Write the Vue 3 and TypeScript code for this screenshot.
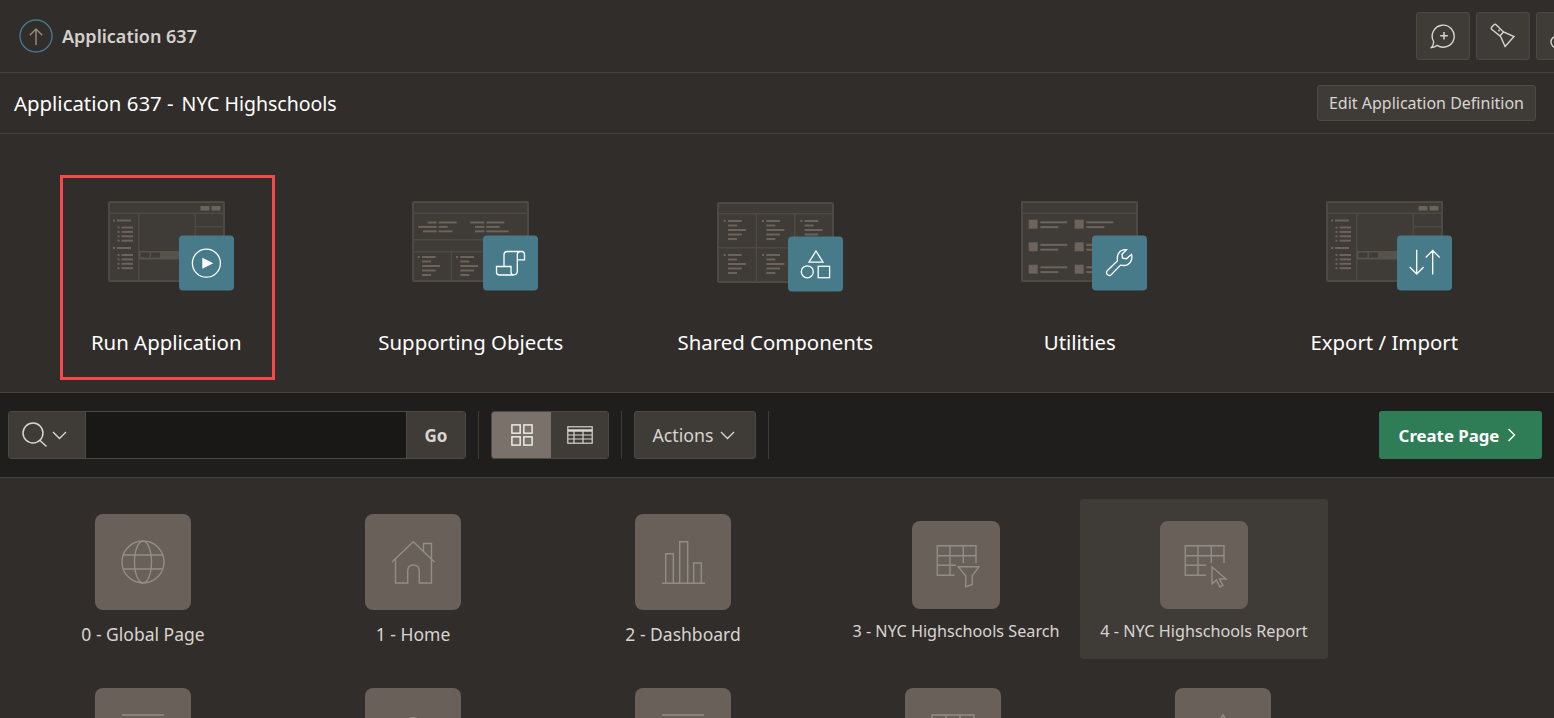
<script setup lang="ts">
type Rect = { x: number; y: number; w: number; h: number; fill: string }
type ArtKind = 'run' | 'objects' | 'shared' | 'utilities' | 'export'

const LINE = '#4d4944'
const BAR = '#6b635c'
const BAND = '#57524c'
const DARK = '#3f3b37'

function line(x: number, y: number, w: number, h: number): Rect {
  return { x, y, w, h, fill: LINE }
}
function bar(x: number, y: number, w: number, h = 2, fill = BAR): Rect {
  return { x, y, w, h, fill }
}

function appLayout(): Rect[] {
  const out: Rect[] = [
    line(1, 11.5, 115, 1.5),
    line(30, 12, 1.5, 68),
    line(86.5, 12, 1.5, 38),
    line(86.5, 25, 30, 1.5),
    bar(31, 50, 56, 8.5, BAND),
    bar(32.5, 51.5, 9, 5, DARK),
    bar(43, 51.5, 9, 5, DARK),
    bar(92.5, 5, 9, 4.6),
    bar(103.5, 5, 9, 4.6),
  ]
  for (const top of [18.5, 46]) {
    out.push(bar(5, top, 2, 2), bar(9, top, 14, 2))
    for (const step of [7, 11.4, 15.8, 20.2]) {
      out.push(bar(9.5, top + step, 2, 2), bar(13.5, top + step, 11.5, 2))
    }
  }
  return out
}

function objectsLayout(): Rect[] {
  const out: Rect[] = [
    line(1, 11.5, 115, 1.5),
    line(1, 38, 115, 1.5),
    line(1, 50, 115, 1.5),
    line(38.6, 50, 1.5, 30),
    line(77, 50, 1.5, 30),
  ]
  const rows: number[][] = [
    [15.7, 9, 26.7, 18, 58.3, 14, 74.3, 18],
    [6.3, 18.4, 26.7, 9, 63, 9.4, 74.3, 13.4],
    [11, 13.7, 26.7, 13.7, 63, 9.4, 74.3, 22.3],
  ]
  rows.forEach((r, i) => {
    for (let k = 0; k < r.length; k += 2) out.push(bar(r[k], 20.5 + i * 4.4, r[k + 1]))
  })
  for (const off of [0, 38.3]) {
    out.push(bar(5.7 + off, 55, 2, 2))
    ;[13.7, 9, 18, 13.7, 9].forEach((w, i) => out.push(bar(10 + off, 55 + i * 4.5, w)))
  }
  return out
}

function sharedLayout(): Rect[] {
  const out: Rect[] = [
    line(1, 11, 115, 1.5),
    line(1, 45, 115, 1.5),
    line(38.6, 11, 1.5, 69),
    line(77, 11, 1.5, 69),
  ]
  for (const top of [18, 52]) {
    for (const off of [0, 38.3, 76.6]) {
      out.push(bar(6.7 + off, top, 2, 2))
      ;[13.7, 9, 18, 13.7, 9].forEach((w, i) => out.push(bar(11 + off, top + i * 4.5, w)))
    }
  }
  return out
}

function utilitiesLayout(): Rect[] {
  const out: Rect[] = [line(1, 11.5, 115, 1.5)]
  for (const top of [18.7, 41.3, 63.7]) {
    for (const off of [7.7, 53.7]) {
      out.push(bar(off, top, 9, 9, BAR), bar(off + 11.6, top + 1.6, 27), bar(off + 11.6, top + 6.4, 18))
    }
  }
  return out
}

const layouts: Record<ArtKind, Rect[]> = {
  run: appLayout(),
  objects: objectsLayout(),
  shared: sharedLayout(),
  utilities: utilitiesLayout(),
  export: appLayout(),
}

const heroItems: { kind: ArtKind; label: string }[] = [
  { kind: 'run', label: 'Run Application' },
  { kind: 'objects', label: 'Supporting Objects' },
  { kind: 'shared', label: 'Shared Components' },
  { kind: 'utilities', label: 'Utilities' },
  { kind: 'export', label: 'Export / Import' },
]

const topRow = [
  { icon: 'globe', label: '0 - Global Page', cls: '' },
  { icon: 'home', label: '1 - Home', cls: '' },
  { icon: 'chart', label: '2 - Dashboard', cls: '' },
  { icon: 'filter', label: '3 - NYC Highschools Search', cls: 'compact first' },
  { icon: 'cursor', label: '4 - NYC Highschools Report', cls: 'compact hovered' },
]
const nextRow = ['form', 'search', 'form', 'table', 'tip']
</script>

<template>
  <div class="page">
    <header class="topbar">
      <div class="crumb">
        <svg class="up" width="34" height="34" viewBox="0 0 34 34" fill="none">
          <circle cx="17" cy="17" r="16" stroke="#47798a" stroke-width="1.4" />
          <path d="M17 26V10M10.800 16.200 17 10l6.200 6.200" stroke="#94877b" stroke-width="1.5" />
        </svg>
        <span>Application 637</span>
      </div>
      <div class="tools">
        <button class="tool">
          <svg width="26" height="26" viewBox="0 0 26 26" fill="none" stroke="#d8d5d1" stroke-width="1.4">
            <path d="M1.500 24.500c2.500-.1 4.400-.9 5.600-2.200a11 11 0 1 0-3.500-3.800c.2 2.400-.5 4.400-2.100 6Z" />
            <path d="M14 9v7.500M10.200 12.700h7.600" stroke-width="1.500" />
          </svg>
        </button>
        <button class="tool">
          <svg width="26" height="26" viewBox="0 0 26 26" fill="none" stroke="#d8d5d1" stroke-width="1.4">
            <path d="M1.500 4.200 4.300 1.500c.6-.5 1.300-.4 1.800.2l7.400 7.300 10.500 4.500-8.900 10-4.500-10-9-7.300c-.6-.5-.6-1.200 0-1.800Z" />
            <path d="m13.500 9-3.400 3.700" />
            <circle cx="9" cy="7.500" r=".9" fill="#d8d5d1" stroke="none" />
          </svg>
        </button>
        <button class="tool">
          <svg width="26" height="26" viewBox="0 0 26 26" fill="none" stroke="#d8d5d1" stroke-width="1.4">
            <circle cx="6.500" cy="19" r="5.500" />
          </svg>
        </button>
      </div>
    </header>

    <div class="titlebar">
      <h1>Application 637 -<span>NYC Highschools</span></h1>
      <button class="edit">Edit Application Definition</button>
    </div>

    <section class="hero">
      <a v-for="(item, i) in heroItems" :key="item.kind" class="hero-item" :class="{ low: item.kind === 'shared' }">
        <span v-if="i === 0" class="marker"></span>
        <svg class="art" width="117" height="81" viewBox="0 0 117 81">
          <rect x="1" y="1" width="115" height="79" rx="1" fill="#3f3b37" stroke="#4d4944" stroke-width="2" />
          <rect v-for="(r, k) in layouts[item.kind]" :key="k" :x="r.x" :y="r.y" :width="r.w" :height="r.h" :fill="r.fill" />
          <g transform="translate(71 34.500)">
            <rect width="55" height="55" rx="4" fill="#487b8a" />
            <g fill="none" stroke="#fff" stroke-width="1.300">
              <template v-if="item.kind === 'run'">
                <circle cx="27.400" cy="27.700" r="14" />
                <path d="M23.300 22.300v11l11-5.500Z" fill="#fff" stroke="none" />
              </template>
              <template v-else-if="item.kind === 'objects'">
                <path d="M21 31V19.500C21 17.500 22.500 16 24.500 16h14c1.800 0 3 1.500 3 3v5.300h-7.200M37.500 16c-2 0-3.200 1.500-3.200 3.500v16c0 2.500-1.800 4-4.300 4H16.500c-1.800 0-3-1.200-3-3V31H28v5.500c0 1.500 1 3 2.500 3" />
              </template>
              <template v-else-if="item.kind === 'shared'">
                <path d="M28 14.500 35 25.700H21Z" />
                <circle cx="19.300" cy="35.300" r="6" />
                <rect x="30.200" y="29.800" width="11.400" height="11.400" />
              </template>
              <template v-else-if="item.kind === 'utilities'">
                <path d="M34.500 14.200 30 18.700l.5 4 4 .5 5-4.400c1.500 5.200-1.500 11.200-8 11.200-1 0-2-.2-3-.4L19 39.500a2.900 2.900 0 0 1-4-4l10.500-10.200c-1-5.300 1.300-11.500 9-11.100Z" />
              </template>
              <template v-else>
                <path d="M19.700 14.300v24M12.700 31.500l7 7 7-7M35.700 15v24M28.700 22l7-7 7 7" />
              </template>
            </g>
          </g>
        </svg>
        <span class="hero-label">{{ item.label }}</span>
      </a>
    </section>

    <section class="toolbar">
      <div class="search">
        <button class="search-type">
          <svg width="26" height="26" viewBox="0 0 26 26" fill="none" stroke="#d8d5d1" stroke-width="1.500">
            <circle cx="11" cy="11" r="10" />
            <path d="m17.500 18 7 6.500" />
          </svg>
          <svg width="15" height="9" viewBox="0 0 15 9" fill="none" stroke="#d8d5d1" stroke-width="1.400">
            <path d="m1 1 6.500 6.500L14 1" />
          </svg>
        </button>
        <div class="search-input"></div>
        <button class="go">Go</button>
      </div>
      <span class="sep"></span>
      <div class="views">
        <button class="view on">
          <svg width="22" height="22" viewBox="0 0 24 24" fill="none" stroke="#eeece9" stroke-width="1.600">
            <rect x="1" y="1" width="9" height="9" />
            <rect x="14" y="1" width="9" height="9" />
            <rect x="1" y="14" width="9" height="9" />
            <rect x="14" y="14" width="9" height="9" />
          </svg>
        </button>
        <button class="view">
          <svg width="26" height="18" viewBox="0 0 26 18" fill="none" stroke="#d8d5d1" stroke-width="1.200">
            <rect x=".8" y=".8" width="24.400" height="16.400" />
            <path d="M.8 4.500h24.400" stroke-width="2.400" />
            <path d="M.8 9h24.400M.8 13h24.400M7 5v12M16 5v12" />
          </svg>
        </button>
      </div>
      <span class="sep"></span>
      <button class="actions">
        Actions
        <svg width="15" height="9" viewBox="0 0 15 9" fill="none" stroke="#d8d5d1" stroke-width="1.400">
          <path d="m1 1 6.500 6.500L14 1" />
        </svg>
      </button>
      <span class="sep"></span>
      <button class="create">
        Create Page
        <svg width="9" height="14" viewBox="0 0 9 14" fill="none" stroke="#fff" stroke-width="1.400">
          <path d="m1.500 1 6 6-6 6" />
        </svg>
      </button>
    </section>

    <section class="pages">
      <div class="page-row">
        <a v-for="p in topRow" :key="p.label" class="page-item" :class="p.cls">
          <span class="tile">
            <svg width="48" height="48" viewBox="0 0 48 48" fill="none" stroke="#938d87" stroke-width="1.400">
              <template v-if="p.icon === 'globe'">
                <circle cx="24" cy="24" r="21" />
                <ellipse cx="24" cy="24" rx="8.500" ry="21" />
                <path d="M4.400 17h39.200M4.400 31h39.200" />
              </template>
              <template v-else-if="p.icon === 'home'">
                <path d="M3 24 24.300 3.700 45.500 24M6.500 21v24h12.200V33c0-4 2.300-6 5.800-6s5.800 2 5.800 6v12h12.200V5.500h-8V14" />
              </template>
              <template v-else-if="p.icon === 'chart'">
                <path d="M3.300 45.300H46M6.700 45V15.700h7.600V45M20.700 45V3.700h8V45M34.700 45V25h7.600v20" />
              </template>
              <template v-else-if="p.icon === 'filter'">
                <path d="M22.500 34.300H5.300V4.700H44V22M5.300 14.700H44M5.300 24.300H24M18 4.700v29.600M31.300 4.700V22M26.300 25.700H47l-6.700 9v8.800l-6.600 2.200v-11Z" />
              </template>
              <template v-else>
                <path d="M26 34.300H5.300V4.700H44V22M5.300 14.700H44M5.300 24.300H26M18 4.700v29.600M31.300 4.700V22M32 26v17l4.500-4 3.500 7 3-1.500-3.500-6.500h6.500Z" />
              </template>
            </svg>
          </span>
          <span class="page-label">{{ p.label }}</span>
        </a>
      </div>
      <div class="page-row">
        <a v-for="(icon, i) in nextRow" :key="i" class="page-item">
          <span class="tile">
            <svg width="48" height="48" viewBox="0 0 48 48" fill="none" stroke="#938d87" stroke-width="1.400">
              <path v-if="icon === 'form'" d="M3 3h42" />
              <path v-else-if="icon === 'search'" d="M18 8a9 9 0 0 1 12 0" />
              <path v-else-if="icon === 'table'" d="M3 8V3h42v5M17 3v5M31 3v5" />
              <path v-else d="M22 6l2-3 2 3" />
            </svg>
          </span>
        </a>
      </div>
    </section>
  </div>
</template>

<style>
html,
body {
  margin: 0;
  background: #312d2a;
}
</style>

<style scoped>
.page {
  height: 718px;
  overflow: hidden;
  background: #312d2a;
  font-family: "Noto Sans", "Open Sans", sans-serif;
  color: #fff;
}

button {
  font-family: inherit;
  cursor: pointer;
}

.topbar {
  height: 72px;
  border-bottom: 1px solid #45413d;
  display: flex;
  align-items: center;
  justify-content: space-between;
  padding-left: 19px;
  overflow: hidden;
}

.crumb {
  display: flex;
  align-items: center;
  gap: 9px;
  font-size: 18px;
  font-weight: 600;
  color: #d4d1cd;
}

.tools {
  display: flex;
  gap: 6px;
  margin-right: -36px;
}

.tool {
  width: 54px;
  height: 48px;
  padding: 0;
  display: flex;
  align-items: center;
  justify-content: center;
  background: #3f3b37;
  border: 1px solid #4d4944;
  border-radius: 3px;
}

.titlebar {
  height: 60px;
  border-bottom: 1px solid #45413d;
  display: flex;
  align-items: center;
  justify-content: space-between;
  padding: 0 18px 0 14px;
}

.titlebar h1 {
  margin: 0;
  font-size: 20.4px;
  font-weight: 400;
}

.titlebar h1 span {
  margin-left: 8px;
  font-size: 19.5px;
}

.edit {
  height: 36px;
  padding: 0 11px;
  background: #3f3b37;
  border: 1px solid #4d4944;
  border-radius: 3px;
  color: #d8d5d1;
  font-size: 16px;
}

.hero {
  height: 258px;
  padding: 0 17.500px 0 14px;
  display: grid;
  grid-template-columns: repeat(5, 1fr);
}

.hero-item {
  position: relative;
  display: flex;
  flex-direction: column;
  align-items: center;
  padding-top: 67px;
}

.art {
  overflow: visible;
}

.hero-item.low .art {
  margin-top: 1px;
  margin-bottom: -1px;
}

.hero-label {
  margin-top: 46px;
  font-size: 20.4px;
  line-height: 28px;
  color: #fff;
}

.marker {
  position: absolute;
  left: 46px;
  top: 41px;
  width: 209px;
  height: 199px;
  border: 3px solid #f64a4a;
}

.toolbar {
  height: 86px;
  box-sizing: border-box;
  background: #201e1c;
  border-top: 1px solid #45413d;
  border-bottom: 1px solid #45413d;
  display: flex;
  align-items: center;
  gap: 12px;
  padding: 0 12px 0 8px;
}

.search {
  display: flex;
  height: 48px;
  box-sizing: border-box;
  border: 1px solid #4d4944;
  border-radius: 3px;
  width: 458px;
  overflow: hidden;
}

.search-type {
  width: 77px;
  padding: 0 0 0 13px;
  display: flex;
  align-items: center;
  gap: 4px;
  background: #3f3b37;
  border: 0;
  border-right: 1px solid #4d4944;
}

.search-input {
  flex: 1;
  background: #1a1816;
}

.go {
  width: 59px;
  background: #3f3b37;
  border: 0;
  border-left: 1px solid #4d4944;
  color: #d8d5d1;
  font-size: 17px;
  font-weight: 700;
}

.sep {
  width: 1px;
  height: 48px;
  background: #3f3b37;
}

.views {
  display: flex;
  height: 48px;
  box-sizing: border-box;
  border: 1px solid #4d4944;
  border-radius: 3px;
  overflow: hidden;
}

.view {
  width: 57px;
  padding: 0;
  display: flex;
  align-items: center;
  justify-content: center;
  background: #3f3b37;
  border: 0;
}

.view.on {
  width: 59px;
  background: #7a716a;
}

.actions {
  width: 122px;
  height: 48px;
  display: flex;
  align-items: center;
  justify-content: center;
  gap: 6px;
  padding: 0 3px 0 0;
  background: #3f3b37;
  border: 1px solid #4d4944;
  border-radius: 3px;
  color: #d8d5d1;
  font-size: 17.800px;
}

.create {
  width: 163px;
  height: 48px;
  margin-left: auto;
  display: flex;
  align-items: center;
  justify-content: center;
  gap: 8px;
  padding: 0 6px 0 0;
  background: #2f7d56;
  border: 0;
  border-radius: 3px;
  color: #fff;
  font-size: 16.800px;
  font-weight: 700;
}

.pages {
  padding-left: 8px;
}

.page-row {
  display: flex;
  height: 174px;
}

.page-item {
  width: 270px;
  box-sizing: border-box;
  padding-top: 36px;
  display: flex;
  flex-direction: column;
  align-items: center;
}

.page-item.compact {
  width: 248px;
  height: 160px;
  margin-top: 21px;
  padding-top: 22px;
  border-radius: 3px;
}

.page-item.first {
  margin-left: 14px;
}

.page-item.hovered {
  background: #3f3c38;
}

.tile {
  width: 96px;
  height: 96px;
  flex: none;
  display: flex;
  align-items: center;
  justify-content: center;
  border-radius: 8px;
  background: #69605a;
}

.compact .tile {
  width: 88px;
  height: 88px;
}

.page-label {
  margin-top: 12px;
  font-size: 17.500px;
  line-height: 24px;
  color: #d8d5d1;
  white-space: nowrap;
}

.compact .page-label {
  margin-top: 10px;
  font-size: 16.200px;
}
</style>
